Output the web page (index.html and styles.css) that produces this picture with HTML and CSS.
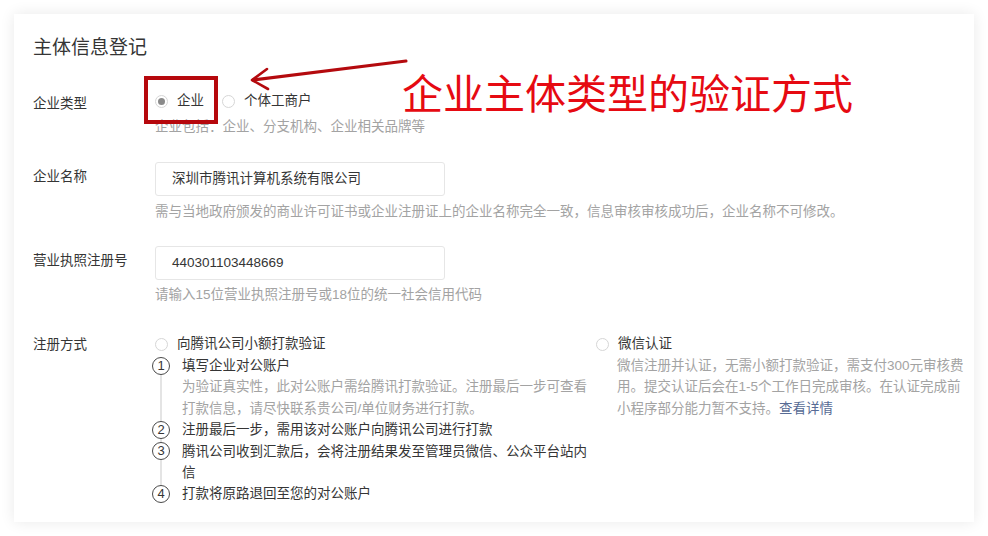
FILE: index.html
```html
<!DOCTYPE html>
<html lang="zh-CN">
<head>
<meta charset="utf-8">
<title>主体信息登记</title>
<link rel="stylesheet" href="styles.css">
</head>
<body>
<div class="card">
  <h2 class="title">主体信息登记</h2>
  <div class="form">
    <div class="row row-type">
      <div class="label lb-type">企业类型</div>
      <div class="field">
        <div class="options">
          <label class="opt"><span class="radio checked"></span><span>企业</span></label>
          <label class="opt"><span class="radio"></span><span>个体工商户</span></label>
        </div>
        <div class="hint hint-type">企业包括：企业、分支机构、企业相关品牌等</div>
      </div>
    </div>
    <div class="row row-name">
      <div class="label lb-input">企业名称</div>
      <div class="field">
        <div class="input">深圳市腾讯计算机系统有限公司</div>
        <div class="hint hint-name">需与当地政府颁发的商业许可证书或企业注册证上的企业名称完全一致，信息审核审核成功后，企业名称不可修改。</div>
      </div>
    </div>
    <div class="row row-license">
      <div class="label lb-input">营业执照注册号</div>
      <div class="field">
        <div class="input">440301103448669</div>
        <div class="hint hint-license">请输入15位营业执照注册号或18位的统一社会信用代码</div>
      </div>
    </div>
    <div class="row row-method">
      <div class="label lb-method">注册方式</div>
      <div class="field methods">
        <div class="method method-bank">
          <label class="opt"><span class="radio"></span><span>向腾讯公司小额打款验证</span></label>
          <ol class="steps">
            <li class="step"><span class="num">1</span><div class="step-body">填写企业对公账户<div class="step-desc">为验证真实性，此对公账户需给腾讯打款验证。注册最后一步可查看打款信息，请尽快联系贵公司/单位财务进行打款。</div></div></li>
            <li class="step"><span class="num">2</span><div class="step-body">注册最后一步，需用该对公账户向腾讯公司进行打款</div></li>
            <li class="step"><span class="num">3</span><div class="step-body">腾讯公司收到汇款后，会将注册结果发至管理员微信、公众平台站内信</div></li>
            <li class="step"><span class="num">4</span><div class="step-body">打款将原路退回至您的对公账户</div></li>
          </ol>
        </div>
        <div class="method method-wx">
          <label class="opt"><span class="radio"></span><span>微信认证</span></label>
          <div class="wx-desc">微信注册并认证，无需小额打款验证，需支付300元审核费用。提交认证后会在1-5个工作日完成审核。在认证完成前小程序部分能力暂不支持。<a class="link" href="#">查看详情</a></div>
        </div>
      </div>
    </div>
  </div>
</div>

<div class="mark-box"></div>
<svg class="mark-arrow" width="988" height="536" viewBox="0 0 988 536">
  <path d="M406 61 L253 80" fill="none" stroke="#b40a0e" stroke-width="3" stroke-linecap="round"/>
  <path d="M267 69 L252 80 L268 89" fill="none" stroke="#b40a0e" stroke-width="2.6" stroke-linecap="round" stroke-linejoin="round"/>
</svg>
<div class="mark-text">企业主体类型的验证方式</div>
</body>
</html>
```

FILE: styles.css
```css
* { box-sizing: border-box; }

html, body {
  margin: 0;
  padding: 0;
  background: #ffffff;
}

body {
  position: relative;
  width: 988px;
  height: 536px;
  overflow: hidden;
  font-family: "Liberation Sans", "Noto Sans CJK SC", sans-serif;
  font-size: 13.5px;
  color: #353535;
}

.card {
  margin: 14px 0 0 14px;
  width: 960px;
  height: 508px;
  background: #fff;
  box-shadow: 0 0 14px rgba(0, 0, 0, 0.09);
  padding: 21px 0 0 19px;
}

.title {
  margin: 0;
  font-size: 19px;
  line-height: 26px;
  font-weight: normal;
  color: #353535;
}

.form {
  margin-top: 29px;
}

.row {
  display: flex;
}

.label {
  width: 122px;
  flex: none;
  line-height: 22px;
  color: #353535;
}

.lb-type { padding-top: 3px; }
.lb-input { padding-top: 4px; }
.lb-method { padding-top: 1px; }

.field {
  flex: 1;
}

.row-type { margin-bottom: 24px; }
.row-name { margin-bottom: 23px; }
.row-license { margin-bottom: 27px; }

.options {
  display: flex;
  gap: 18px;
  line-height: 22px;
}

.opt {
  display: flex;
  align-items: center;
  gap: 9px;
  line-height: 22px;
  color: #353535;
}

.radio {
  width: 13px;
  height: 13px;
  border: 1px solid #d6d6d6;
  border-radius: 50%;
  background: #fff;
  display: flex;
  align-items: center;
  justify-content: center;
  flex: none;
}

.radio.checked::after {
  content: "";
  width: 7px;
  height: 7px;
  border-radius: 50%;
  background: #8a8a8a;
}

.hint {
  line-height: 22px;
  color: #a3a3a3;
}

.hint-type { margin-top: 4px; }
.hint-name { margin-top: 5px; }
.hint-license { margin-top: 4px; }

.input {
  width: 290px;
  height: 34px;
  border: 1px solid #e6e6e6;
  border-radius: 3px;
  padding-left: 16px;
  line-height: 32px;
  color: #353535;
}

.methods {
  display: flex;
}

.method-bank {
  width: 441px;
  flex: none;
}

.steps {
  list-style: none;
  margin: 0;
  padding: 0;
  position: relative;
}

.steps::before {
  content: "";
  position: absolute;
  left: 5px;
  top: 12px;
  bottom: 12px;
  width: 2px;
  background: #e4e4e4;
}

.step {
  display: flex;
  line-height: 21.4px;
  color: #353535;
}

.num {
  position: relative;
  flex: none;
  width: 18px;
  height: 18px;
  margin: 1.7px 12px 0 -3px;
  border: 1.3px solid #4a4a4a;
  border-radius: 50%;
  background: #fff;
  font-size: 13px;
  line-height: 15.5px;
  text-align: center;
  color: #353535;
}

.step-body {
  width: 411px;
}

.step-desc {
  color: #a3a3a3;
}

.method-wx {
  flex: none;
}

.wx-desc {
  margin-left: 21px;
  width: 353px;
  line-height: 21.4px;
  color: #a3a3a3;
}

.link {
  color: #576b95;
  text-decoration: none;
}

.mark-box {
  position: absolute;
  left: 144px;
  top: 76px;
  width: 74px;
  height: 48px;
  border: 4px solid #b6080d;
}

.mark-arrow {
  position: absolute;
  left: 0;
  top: 0;
  pointer-events: none;
}

.mark-text {
  position: absolute;
  left: 402px;
  top: 71px;
  font-family: "Noto Sans CJK SC", sans-serif;
  font-size: 41px;
  line-height: 41px;
  color: #e60a12;
  white-space: nowrap;
}
```
